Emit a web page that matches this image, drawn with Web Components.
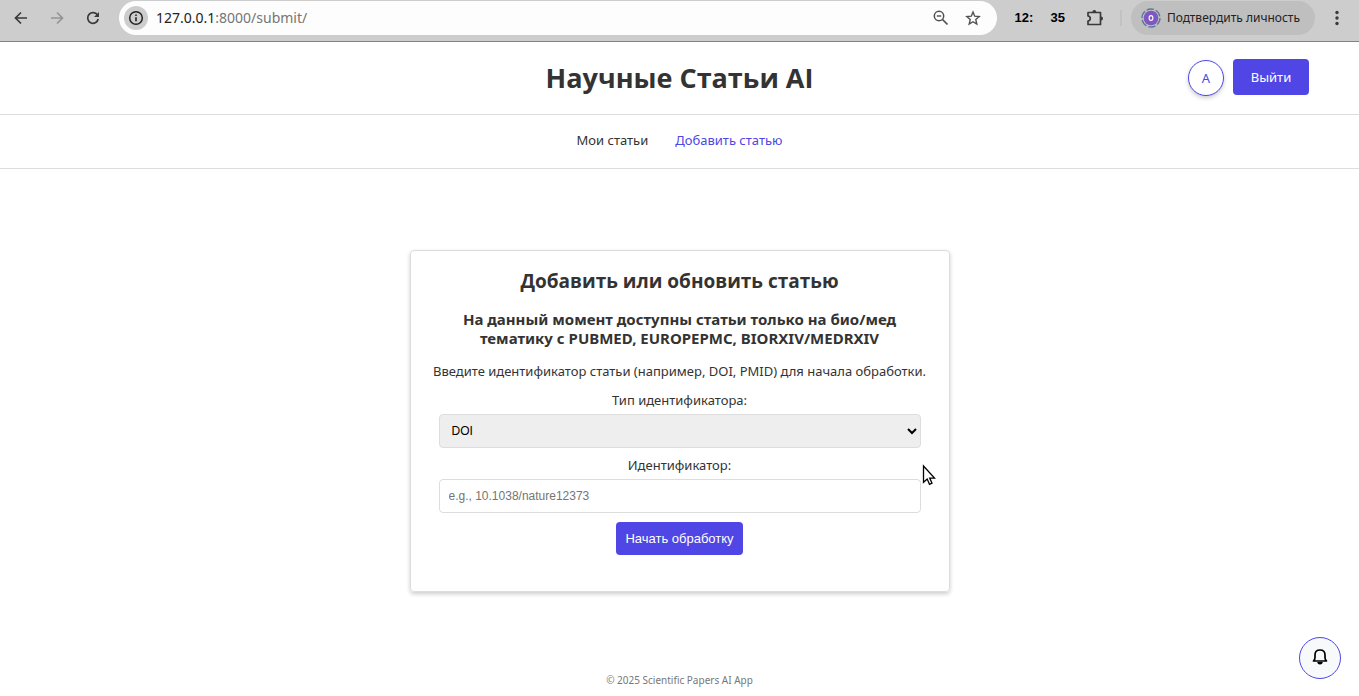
<!DOCTYPE html>
<html lang="ru">
<head>
<meta charset="utf-8">
<title>Научные Статьи AI</title>
<style>
  body {
    margin: 0;
    min-height: 100vh;
    display: flex;
    flex-direction: column;
    background: #fff;
    color: #333;
    font: 13px/20px "Noto Sans", sans-serif;
    --accent: #4f46e5;
    --line: #ddd;
    --heading: "Open Sans", "Noto Sans", sans-serif;
  }
</style>
</head>
<body>
<browser-bar></browser-bar>
<site-header><span slot="title">Научные Статьи AI</span></site-header>
<site-nav></site-nav>
<site-main>
  <submit-card>
    <span slot="title">Добавить или обновить статью</span>
    <span slot="note">На данный момент доступны статьи только на био/мед тематику с PUBMED, EUROPEPMC, BIORXIV/MEDRXIV</span>
    <span slot="hint">Введите идентификатор статьи (например, DOI, PMID) для начала обработки.</span>
  </submit-card>
</site-main>
<site-footer>© 2025 Scientific Papers AI App</site-footer>
<notify-bell></notify-bell>
<mouse-pointer></mouse-pointer>

<script>
  const define = (name, html) => customElements.define(name, class extends HTMLElement {
    constructor() {
      super();
      this.attachShadow({ mode: "open" }).innerHTML = html;
    }
  });

  define("browser-bar", `
    <style>
      :host { display: block; background: #cdcdcd; border-bottom: 1px solid #818181; color: #3a3a3a; }
      .bar { display: flex; align-items: center; height: 35px; padding: 0 12px 6px 11px; }
      button { display: flex; align-items: center; justify-content: center; border: 0; padding: 0; background: none; color: inherit; font: inherit; }
      svg { display: block; fill: none; stroke: currentColor; stroke-width: 2; }
      .nav { display: flex; gap: 16px; }
      .nav button { width: 20px; height: 20px; }
      .nav svg { stroke-width: 1.700; }
      .nav .off { color: #949494; }
      .address { flex: 1; display: flex; align-items: center; box-sizing: border-box; height: 34px; margin-left: 16px; padding: 0 14px 0 5px; border-radius: 17px; background: #fdfdfd; }
      .info { width: 24px; height: 24px; border-radius: 50%; background: #cdcdcd; color: #222; }
      .url { flex: 1; margin-left: 8px; font-size: 14px; color: #757575; }
      .url b { font-weight: 400; color: #222; }
      .tools { display: flex; gap: 12px; color: #505050; }
      .tools button { width: 20px; height: 20px; }
      .clock { display: flex; gap: 17px; margin: 0 20px 0 18px; font: bold 13px/20px "Liberation Sans", sans-serif; color: #000; }
      .sep { width: 2px; height: 16px; margin: 0 9px 0 15px; background: #c2c2c2; }
      .profile { height: 34px; gap: 6px; padding: 0 15px 0 10px; border-radius: 17px; background: #bfbfbf; color: #222; font-size: 12px; }
      .more { width: 20px; height: 20px; margin-left: 12px; }
    </style>
    <div class="bar">
      <div class="nav">
        <button aria-label="Назад"><svg width="20" height="20" viewBox="0 0 20 20"><path d="M16 10H5M10 4.500L4.500 10l5.500 5.500"/></svg></button>
        <button class="off" aria-label="Вперёд"><svg width="20" height="20" viewBox="0 0 20 20"><path d="M4 10h11M10 4.500L15.500 10 10 15.500"/></svg></button>
        <button aria-label="Обновить"><svg width="20" height="20" viewBox="0 0 20 20"><path d="M14.500 7.200A5.300 5.300 0 1 0 15.200 11"/><path d="M16 4v5h-5z" fill="currentColor" stroke="none"/></svg></button>
      </div>
      <div class="address">
        <button class="info" aria-label="Сведения о сайте"><svg width="16" height="16" viewBox="0 0 16 16"><circle cx="8" cy="8" r="6.300" stroke-width="1.500"/><path d="M8 7.200v4M8 4.500v1.600" stroke-width="1.600"/></svg></button>
        <div class="url" role="textbox" aria-label="Адрес"><b>127.0.0.1</b>:8000/submit/</div>
        <div class="tools">
          <button aria-label="Масштаб"><svg width="20" height="20" viewBox="0 0 20 20"><circle cx="8" cy="8" r="4.700" stroke-width="1.500"/><path d="M11.500 11.500L16.500 16.500" stroke-width="1.700"/><path d="M5.800 8h4.400" stroke-width="1.400"/></svg></button>
          <button aria-label="В закладки"><svg width="20" height="20" viewBox="0 0 20 20"><path d="M10 4l1.700 4.200 4.500.4-3.400 3 1 4.400L10 13.700 6.200 16l1-4.400-3.400-3 4.500-.4z" stroke-width="1.400"/></svg></button>
        </div>
      </div>
      <div class="clock"><span>12:</span><span>35</span></div>
      <button aria-label="Расширения"><svg width="20" height="20" viewBox="0 0 20 20"><path d="M3 4.500h12.500v12H3v-3.500c3-.4 3-4.600 0-5z" stroke-width="1.700" stroke-linejoin="round"/><path d="M7.300 4a2 2 0 0 1 4 0zM16 8.500a2 2 0 0 1 0 4z" fill="currentColor" stroke="none"/></svg></button>
      <i class="sep"></i>
      <button class="profile">
        <svg width="20" height="20" viewBox="0 0 20 20"><circle cx="10" cy="10" r="9" stroke="#5b779c" stroke-width="1.300" stroke-dasharray="7.400 2"/><circle cx="10" cy="10" r="7.300" fill="#7e57c2" stroke="none"/><ellipse cx="10" cy="10" rx="1.900" ry="2.400" stroke="#fff" stroke-width="1.100"/></svg>
        <span>Подтвердить личность</span>
      </button>
      <button class="more" aria-label="Меню"><svg width="20" height="20" viewBox="0 0 20 20"><g fill="currentColor" stroke="none"><circle cx="10" cy="4.500" r="1.700"/><circle cx="10" cy="10" r="1.700"/><circle cx="10" cy="15.500" r="1.700"/></g></svg></button>
    </div>`);

  define("site-header", `
    <style>
      :host { display: grid; grid-template-columns: 1fr auto 1fr; align-items: center; height: 72px; padding: 0 50px; border-bottom: 1px solid var(--line); }
      h1 { grid-column: 2; margin: 0; font-family: var(--heading); font-size: 27px; line-height: 36px; }
      .user { display: flex; justify-content: flex-end; align-items: center; gap: 9px; margin-bottom: 2px; }
      .avatar { display: flex; align-items: center; justify-content: center; box-sizing: border-box; width: 36px; height: 36px; margin-top: 2px; border: 1px solid var(--accent); border-radius: 50%; background: #fff; color: var(--accent); text-decoration: none; box-shadow: 0 2px 4px rgba(0,0,0,.2); }
      button { min-width: 76px; height: 36px; padding: 0 16px; border: 0; border-radius: 4px; background: var(--accent); color: #fff; font: inherit; }
    </style>
    <h1><slot name="title"></slot></h1>
    <div class="user"><a class="avatar" href="#profile">A</a><button>Выйти</button></div>`);

  define("site-nav", `
    <style>
      :host { display: block; border-bottom: 1px solid var(--line); }
      nav { display: flex; justify-content: center; gap: 27px; padding: 15px 0 18px; }
      a { color: #333; text-decoration: none; }
      a[aria-current] { color: var(--accent); }
    </style>
    <nav><a href="#list">Мои статьи</a><a href="#submit" aria-current="page">Добавить статью</a></nav>`);

  define("site-main", `
    <style>
      :host { flex: 1; display: flex; align-items: center; justify-content: center; padding: 24px 16px; }
    </style>
    <slot></slot>`);

  define("submit-card", `
    <style>
      :host { display: block; box-sizing: border-box; width: 100%; max-width: 540px; padding: 17px 28px 36px; border: 1px solid var(--line); border-radius: 4px; text-align: center; box-shadow: 0 2px 4px rgba(0,0,0,.2); }
      h2 { margin: 0 0 16px; font-family: var(--heading); font-size: 19px; line-height: 26px; }
      h3 { margin: 0 0 13px; font-size: 15px; line-height: 19px; }
      p { margin: 0 -8px 9px; }
      form { display: flex; flex-direction: column; }
      label { margin-bottom: 4px; }
      select, input { box-sizing: border-box; width: 100%; height: 34px; margin: 0; border: 1px solid var(--line); border-radius: 4px; font: 12px "Liberation Sans", sans-serif; }
      select { margin-bottom: 7px; padding: 0 8px; background: #eee; color: #000; }
      input { margin-bottom: 9px; padding: 0 9px; background: #fff; color: #000; }
      input::placeholder { color: #757575; }
      button { align-self: center; height: 33px; padding: 0 9px; border: 0; border-radius: 4px; background: var(--accent); color: #fff; font: 13px "Liberation Sans", sans-serif; }
    </style>
    <h2><slot name="title"></slot></h2>
    <h3><slot name="note"></slot></h3>
    <p><slot name="hint"></slot></p>
    <form>
      <label for="kind">Тип идентификатора:</label>
      <select id="kind"><option>DOI</option><option>PMID</option></select>
      <label for="ident">Идентификатор:</label>
      <input id="ident" type="text" placeholder="e.g., 10.1038/nature12373">
      <button type="button">Начать обработку</button>
    </form>`);

  define("site-footer", `
    <style>
      :host { display: block; padding-bottom: 8px; text-align: center; font-size: 10px; line-height: 15px; color: #777; }
    </style>
    <footer><slot></slot></footer>`);

  define("notify-bell", `
    <style>
      :host { position: fixed; right: 18px; bottom: 17px; }
      button { display: flex; align-items: center; justify-content: center; box-sizing: border-box; width: 42px; height: 42px; padding: 0; border: 1px solid var(--accent); border-radius: 50%; background: #f8f9fb; color: #000; }
      svg { display: block; fill: none; stroke: currentColor; stroke-width: 1.700; }
    </style>
    <button aria-label="Уведомления"><svg width="20" height="20" viewBox="0 0 20 20"><path d="M3.500 13c1-1 1.500-2 1.500-3.500V7c0-3 2-5 5-5s5 2 5 5v2.500c0 1.500.5 2.500 1.500 3.500z" stroke-linejoin="round"/><path d="M7.300 14h5.400a2.700 2.400 0 0 1-5.400 0z" fill="currentColor" stroke="none"/></svg></button>`);

  define("mouse-pointer", `
    <style>
      :host { position: absolute; left: 922px; top: 464px; pointer-events: none; }
      svg { display: block; }
    </style>
    <svg width="14" height="22" viewBox="0 0 14 22"><path d="M1.500 2v16.300l3.700-3.200 2.300 5.200 2.500-1.100-2.300-5.100h4.800z" fill="#fff" stroke="#000" stroke-width="1.300"/></svg>`);
</script>
</body>
</html>
